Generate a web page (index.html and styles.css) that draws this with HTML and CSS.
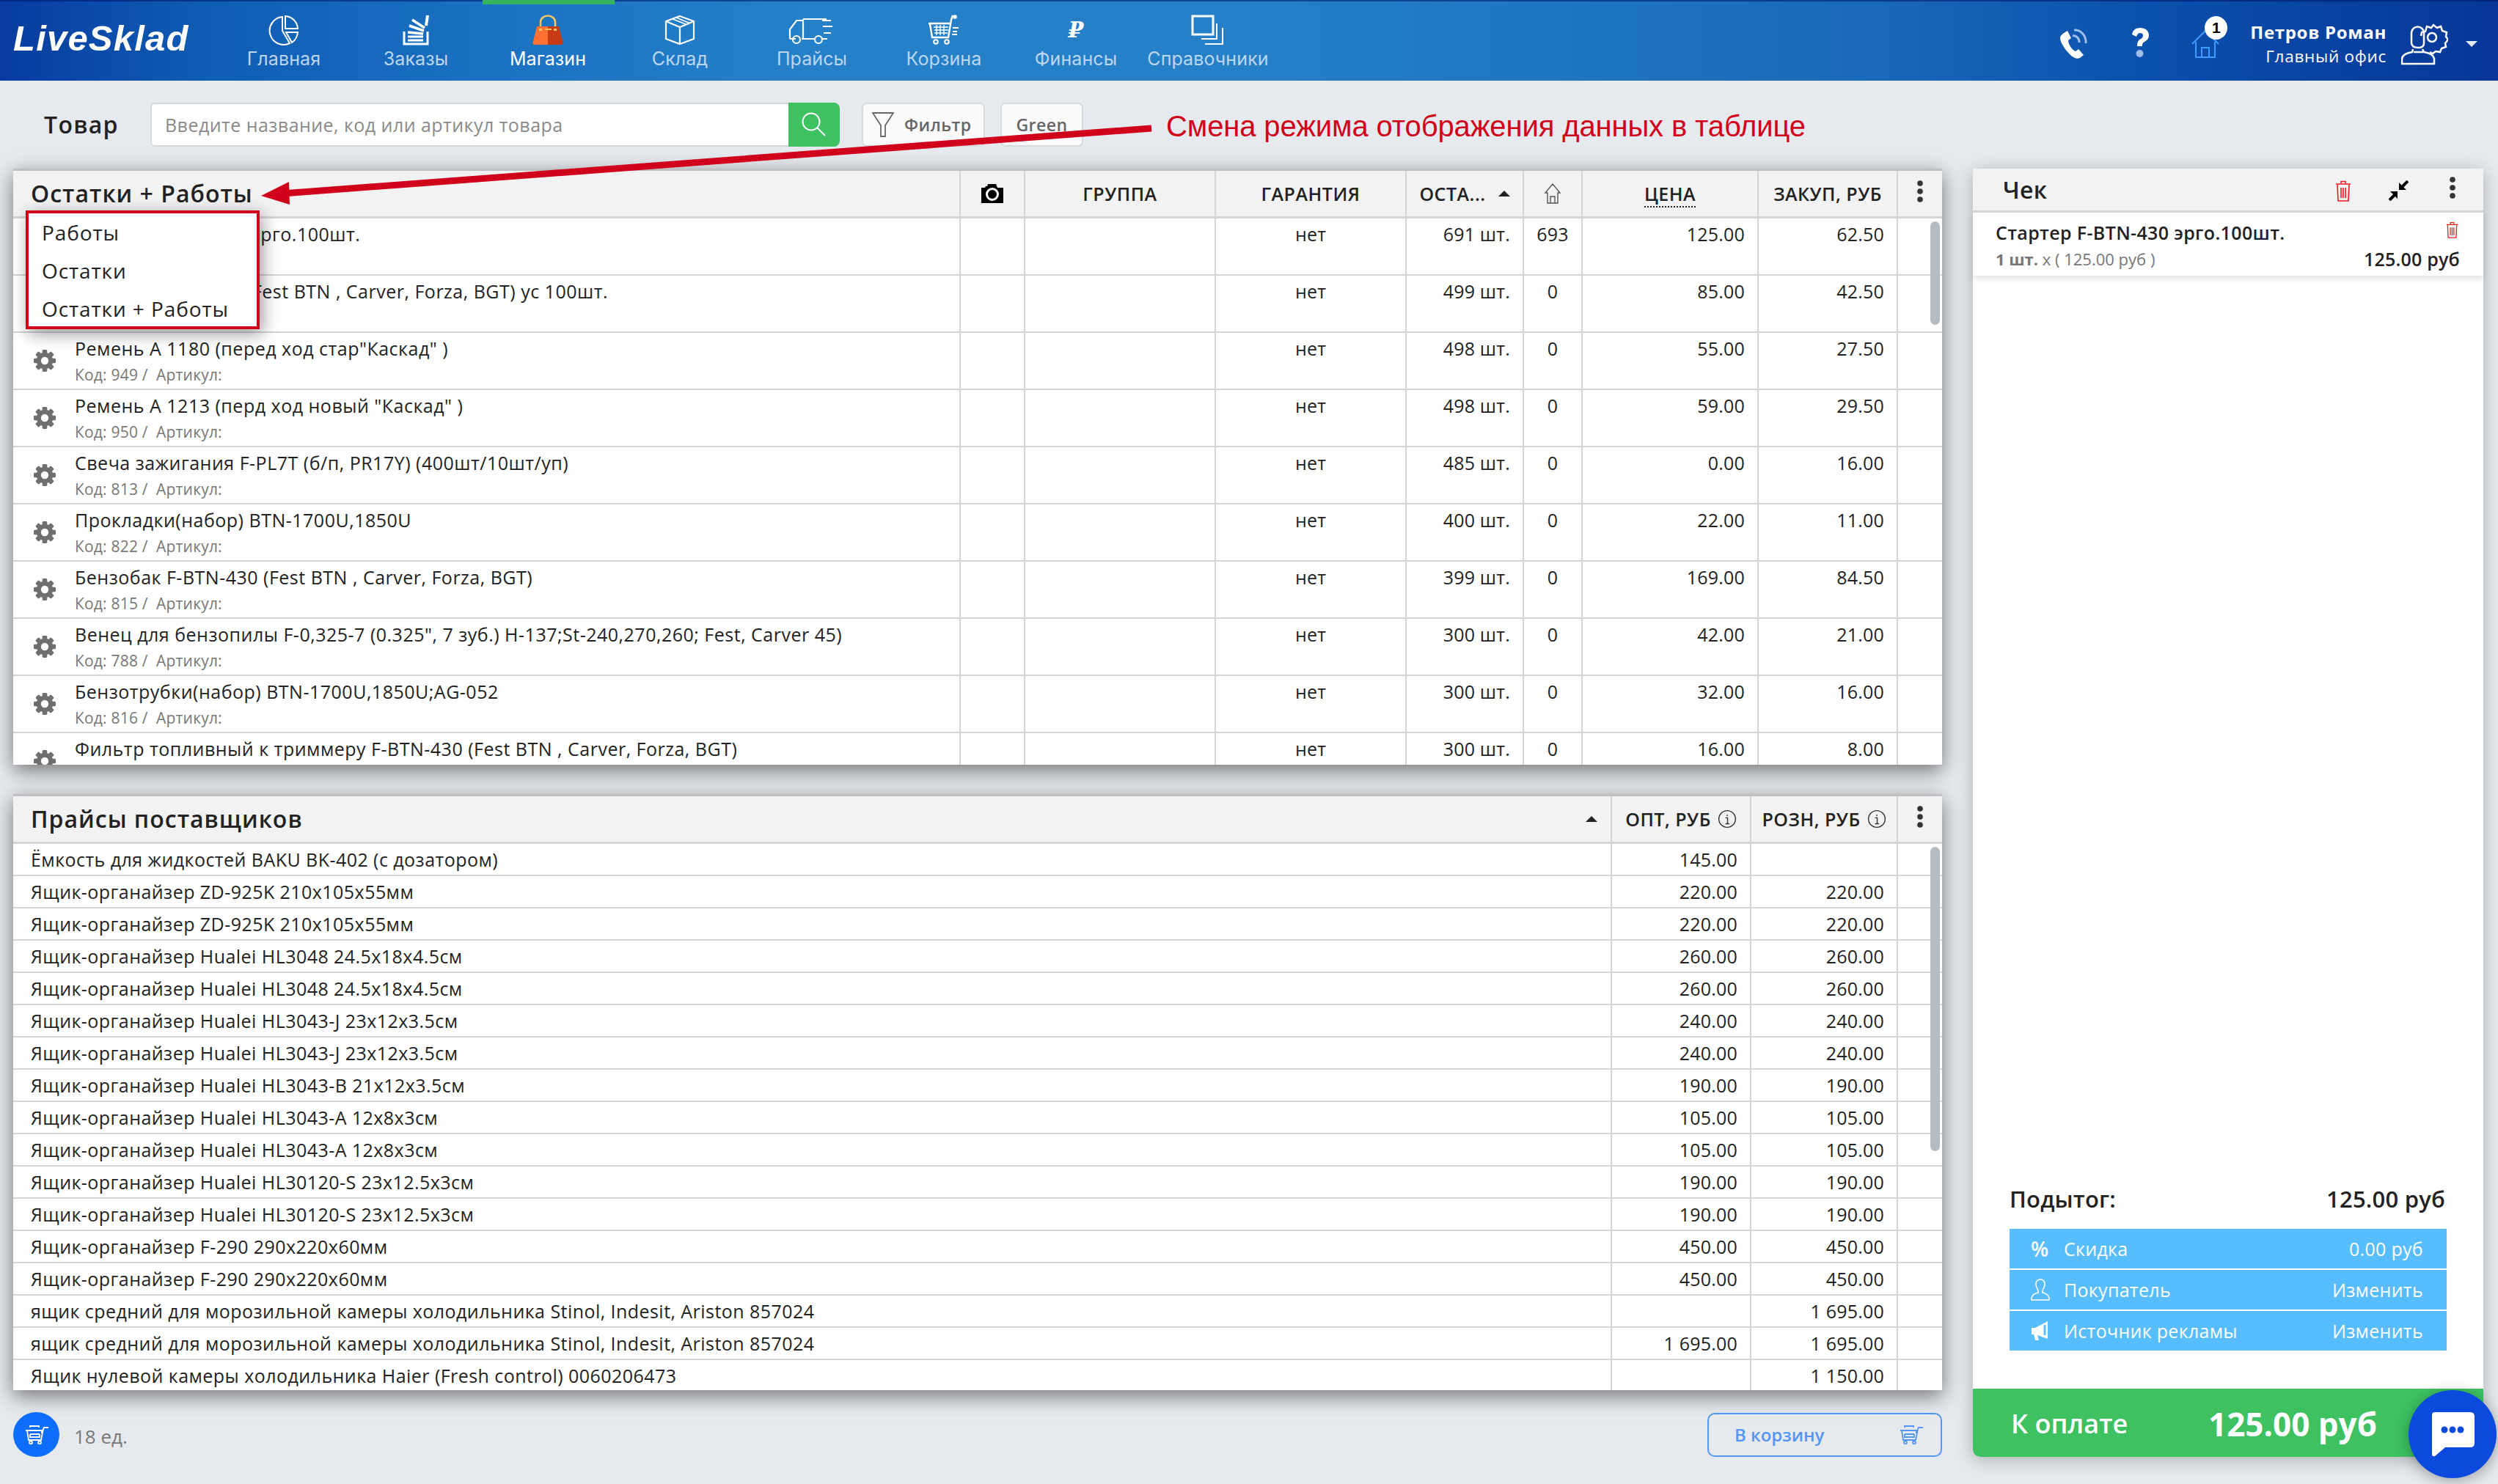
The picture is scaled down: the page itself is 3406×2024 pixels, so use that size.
FILE: index.html
```html
<!DOCTYPE html>
<html lang="ru">
<head>
<meta charset="utf-8">
<title>LiveSklad</title>
<link rel="stylesheet" href="styles.css">
</head>
<body>
<svg class="defs" width="0" height="0">
  <symbol id="gear" viewBox="0 0 32 32">
    <g fill="#6f6f6f">
      <rect x="12.5" y="0" width="7" height="32" rx="1.5"/>
      <rect x="12.5" y="0" width="7" height="32" rx="1.5" transform="rotate(45 16 16)"/>
      <rect x="12.5" y="0" width="7" height="32" rx="1.5" transform="rotate(90 16 16)"/>
      <rect x="12.5" y="0" width="7" height="32" rx="1.5" transform="rotate(135 16 16)"/>
      <circle cx="16" cy="16" r="12"/>
    </g>
    <circle cx="16" cy="16" r="5.5" fill="#fff"/>
  </symbol>
  <symbol id="trash" viewBox="0 0 22 30">
    <g fill="none" stroke="currentColor" stroke-width="1.600">
      <path d="M1 5h20M8 4V1.500h6V4M3 6l1 22h14l1-22M8 10v14M11 10v14M14 10v14"/>
    </g>
  </symbol>
  <symbol id="dots" viewBox="0 0 10 30">
    <circle cx="5" cy="4" r="3.800" fill="currentColor"/><circle cx="5" cy="15" r="3.800" fill="currentColor"/><circle cx="5" cy="26" r="3.800" fill="currentColor"/>
  </symbol>
  <symbol id="cart" viewBox="0 0 32 26">
    <g fill="none" stroke="currentColor" stroke-width="1.800">
      <path d="M1 7h22v4M3 7l2 13h17l3-15 1-2h6M7 3V1h12v2M7 12v4h13v-4M7 12h13"/>
      <circle cx="8" cy="23.500" r="2"/><circle cx="20" cy="23.500" r="2"/>
    </g>
  </symbol>
  <symbol id="info" viewBox="0 0 24 24">
    <circle cx="12" cy="12" r="10.500" fill="none" stroke="#333" stroke-width="1.300"/>
    <path d="M12 6.500v1.800M9.800 10.500H12.500V17.500M9.800 18h5" fill="none" stroke="#333" stroke-width="1.300"/>
  </symbol>
</svg>

<header class="topbar">
  <div class="activebar"></div>
  <div class="logo">LiveSklad</div>
  <nav class="nav">
    <a class="navitem">
      <svg class="navicon" width="42" height="42" viewBox="0 0 42 42"><g fill="none" stroke="#fff" stroke-width="2"><path d="M23 2a18 18 0 0 1 17 17H23zM19 3a19 19 0 1 0 10 36L19 22zM24 24h16a19 19 0 0 1-8 14z"/></g></svg>
      <span>Главная</span>
    </a>
    <a class="navitem">
      <svg class="navicon" width="36" height="42" viewBox="0 0 36 42"><g fill="none" stroke="#fff"><path d="M2 23v17h32V23" stroke-width="3"/><path d="M7 35h21M7 30h21" stroke-width="3"/><path d="M7 24l21 2M9 15l20 7M13 7l17 11" stroke-width="3.500"/><path d="M34 1l-2 14" stroke-width="4"/></g></svg>
      <span>Заказы</span>
    </a>
    <a class="navitem navactive">
      <svg class="navicon" width="42" height="42" viewBox="0 0 42 42"><path d="M11 20V10a10 8.500 0 0 1 20 0v10" fill="none" stroke="#f7c660" stroke-width="2.500"/><path d="M6 16h15v25H3q-3 0-2.500-3z" fill="#ff7032"/><path d="M21 16h15l5.500 22q.5 3-2.500 3H21z" fill="#c63a14"/><path d="M9 19h4v3H9zM29 19h4v3h-4zM17 19h9v2h-9z" fill="#f7c660"/></svg>
      <span>Магазин</span>
    </a>
    <a class="navitem">
      <svg class="navicon" width="42" height="42" viewBox="0 0 42 42"><g fill="none" stroke="#fff" stroke-width="2.200"><path d="M21 2l19 7v24l-19 7-19-7V9zM2 9l19 8 19-8M21 17v23"/><path d="M10 5.500l19 7.500M15 3.500l19 8" stroke-width="1.800"/></g></svg>
      <span>Склад</span>
    </a>
    <a class="navitem">
      <svg class="navicon" width="64" height="42" viewBox="0 0 64 42"><g fill="none" stroke="#fff" stroke-width="2.200"><path d="M10 33H4q-2 0-2-2V20L11 8h9M20 6h32M20 6v27M18 33h15M21 33h14M47 33h6M58 8H46M60 16H47M58 25H48"/><circle cx="11" cy="34" r="5"/><circle cx="41" cy="34" r="5"/></g></svg>
      <span>Прайсы</span>
    </a>
    <a class="navitem">
      <svg class="navicon" width="44" height="42" viewBox="0 0 44 42"><g fill="none" stroke="#fff" stroke-width="2"><path d="M1 12h30M3 13l3 18h22l4-24 2-6" stroke-width="2.400"/><path d="M8 17h20M9 21h19M9 25h18M12 14v14M17 14v14M22 14v14" stroke-width="1.400"/><path d="M34 18h8M34 23h6M33 27h7" stroke-width="1.800"/><circle cx="11" cy="37" r="2.800"/><circle cx="26" cy="37" r="2.800"/></g><circle cx="37" cy="3" r="2.800" fill="#fff"/></svg>
      <span>Корзина</span>
    </a>
    <a class="navitem">
      <span class="rub">₽</span>
      <span>Финансы</span>
    </a>
    <a class="navitem">
      <svg class="navicon" width="46" height="42" viewBox="0 0 46 42"><g fill="none" stroke="#fff"><rect x="2" y="2" width="28" height="25" stroke-width="3"/><path d="M35 12v21H14" stroke-width="2"/><path d="M43 18v22H19" stroke-width="2"/></g></svg>
      <span>Справочники</span>
    </a>
  </nav>
  <div class="userbar">
    <svg class="ic-phone" width="42" height="44" viewBox="0 0 42 44"><path d="M8 9l5-3 5 10-4 3c0 5 5 13 10 15l4-3 7 8-5 4c-4 2-9 0-14-5C10 32 3 22 3 16c0-3 2-5 5-7z" fill="#fff"/><path d="M20 13c5-1 9 3 9 9M22 5c8-1 17 7 16 18" fill="none" stroke="#9bbfe8" stroke-width="3"/></svg>
    <svg class="ic-help" width="28" height="44" viewBox="0 0 28 44"><path d="M3 11C4 5 8 2 14 2c7 0 12 4 12 10 0 5-3 7-6 9-3 2-3 3-3 6H10c0-5 1-8 5-10 2-1 3-3 3-5 0-2-2-3-4-3-3 0-4 2-5 5z" fill="#fff"/><circle cx="13.500" cy="37" r="5" fill="#9bbfe8"/></svg>
    <div class="homewrap">
      <svg width="38" height="40" viewBox="0 0 38 40"><g fill="none" stroke="#3f9bff" stroke-width="2"><path d="M1 20L19 2l18 18M6 17v21h26V17M14 38V25h10v13"/></g></svg>
      <div class="badge">1</div>
    </div>
    <div class="username">
      <div class="uname">Петров Роман</div>
      <div class="uoffice">Главный офис</div>
    </div>
    <svg class="ic-user" width="64" height="64" viewBox="0 0 64 64"><g fill="none" stroke="#fff" stroke-width="2.500"><path d="M27 23l1-5 5-1 2-7 6 2 3-4 5 4 5-2 2 6 6 2-1 6 3 4-4 5 1 5-6 2-2 5-6-1-4 3-4-2"/><circle cx="42" cy="25" r="6"/><path d="M14 19a8 8 0 0 1 17 0v14q0 6-8 6t-9-6zM16 41l-1 4q-13 2-14 9v7h44v-7q-1-7-14-9l-2-4M17 45h13"/></g></svg>
    <div class="caret"></div>
  </div>
</header>

<section class="toolbar">
  <div class="tool-label">Товар</div>
  <div class="search">
    <div class="search-input">Введите название, код или артикул товара</div>
    <div class="search-btn">
      <svg width="36" height="36" viewBox="0 0 36 36"><circle cx="14" cy="14" r="11.500" fill="none" stroke="#fff" stroke-width="2"/><path d="M22 22l11 11" stroke="#fff" stroke-width="2"/></svg>
    </div>
  </div>
  <div class="tool-btn btn-filter">
    <svg width="30" height="34" viewBox="0 0 30 34"><path d="M1 1h28L18 18v15h-6V18z" fill="none" stroke="#666" stroke-width="1.800"/></svg>
    <span>Фильтр</span>
  </div>
  <div class="tool-btn btn-green"><span>Green</span></div>
</section>

<main class="content">
  <div class="leftcol">
    <section class="panel panel-stock">
      <div class="row1 head">
        <div class="c name title"><span class="switch">Остатки + Работы</span></div>
        <div class="c ctr"><svg width="32" height="28" viewBox="0 0 32 28"><path d="M1 6h5l1-2h2l1-3h11l2 5h8v21H1z" fill="#000"/><circle cx="16" cy="15" r="7.500" fill="none" stroke="#fff" stroke-width="3"/></svg></div>
        <div class="c ctr hl">ГРУППА</div>
        <div class="c ctr hl">ГАРАНТИЯ</div>
        <div class="c ctr hl">ОСТА... <i class="sort"></i></div>
        <div class="c ctr"><svg width="24" height="28" viewBox="0 0 24 28"><g fill="none" stroke="#555" stroke-width="1.400"><path d="M12 1l10 12h-3v14H5V13H2zM9 27v-9h6v9"/></g></svg></div>
        <div class="c ctr hl"><span class="dotted">ЦЕНА</span></div>
        <div class="c ctr hl">ЗАКУП, РУБ</div>
        <div class="c ctr menu"><svg class="dots" width="10" height="30"><use href="#dots"/></svg></div>
      </div>
      <div class="body">
        <div class="row1 item"><div class="c name"><svg class="gear"><use href="#gear"/></svg><div class="it"><div class="t">Стартер F-BTN-430 эрго.100шт.</div></div></div><div class="c"></div><div class="c"></div><div class="c ctr-t">нет</div><div class="c num">691 шт.</div><div class="c ctr-t">693</div><div class="c num">125.00</div><div class="c num">62.50</div><div class="c"></div></div>
        <div class="row1 item"><div class="c name"><svg class="gear"><use href="#gear"/></svg><div class="it"><div class="t">Фильтр F-BTN-430 (Fest BTN , Carver, Forza, BGT) ус 100шт.</div></div></div><div class="c"></div><div class="c"></div><div class="c ctr-t">нет</div><div class="c num">499 шт.</div><div class="c ctr-t">0</div><div class="c num">85.00</div><div class="c num">42.50</div><div class="c"></div></div>
        <div class="row1 item"><div class="c name"><svg class="gear"><use href="#gear"/></svg><div class="it"><div class="t">Ремень А 1180 (перед ход стар"Каскад" )</div><div class="s">Код: 949 /&nbsp; Артикул:</div></div></div><div class="c"></div><div class="c"></div><div class="c ctr-t">нет</div><div class="c num">498 шт.</div><div class="c ctr-t">0</div><div class="c num">55.00</div><div class="c num">27.50</div><div class="c"></div></div>
        <div class="row1 item"><div class="c name"><svg class="gear"><use href="#gear"/></svg><div class="it"><div class="t">Ремень А 1213 (перд ход новый "Каскад" )</div><div class="s">Код: 950 /&nbsp; Артикул:</div></div></div><div class="c"></div><div class="c"></div><div class="c ctr-t">нет</div><div class="c num">498 шт.</div><div class="c ctr-t">0</div><div class="c num">59.00</div><div class="c num">29.50</div><div class="c"></div></div>
        <div class="row1 item"><div class="c name"><svg class="gear"><use href="#gear"/></svg><div class="it"><div class="t">Свеча зажигания F-PL7T (б/п, PR17Y) (400шт/10шт/уп)</div><div class="s">Код: 813 /&nbsp; Артикул:</div></div></div><div class="c"></div><div class="c"></div><div class="c ctr-t">нет</div><div class="c num">485 шт.</div><div class="c ctr-t">0</div><div class="c num">0.00</div><div class="c num">16.00</div><div class="c"></div></div>
        <div class="row1 item"><div class="c name"><svg class="gear"><use href="#gear"/></svg><div class="it"><div class="t">Прокладки(набор) BTN-1700U,1850U</div><div class="s">Код: 822 /&nbsp; Артикул:</div></div></div><div class="c"></div><div class="c"></div><div class="c ctr-t">нет</div><div class="c num">400 шт.</div><div class="c ctr-t">0</div><div class="c num">22.00</div><div class="c num">11.00</div><div class="c"></div></div>
        <div class="row1 item"><div class="c name"><svg class="gear"><use href="#gear"/></svg><div class="it"><div class="t">Бензобак F-BTN-430 (Fest BTN , Carver, Forza, BGT)</div><div class="s">Код: 815 /&nbsp; Артикул:</div></div></div><div class="c"></div><div class="c"></div><div class="c ctr-t">нет</div><div class="c num">399 шт.</div><div class="c ctr-t">0</div><div class="c num">169.00</div><div class="c num">84.50</div><div class="c"></div></div>
        <div class="row1 item"><div class="c name"><svg class="gear"><use href="#gear"/></svg><div class="it"><div class="t">Венец для бензопилы F-0,325-7 (0.325", 7 зуб.) H-137;St-240,270,260; Fest, Carver 45)</div><div class="s">Код: 788 /&nbsp; Артикул:</div></div></div><div class="c"></div><div class="c"></div><div class="c ctr-t">нет</div><div class="c num">300 шт.</div><div class="c ctr-t">0</div><div class="c num">42.00</div><div class="c num">21.00</div><div class="c"></div></div>
        <div class="row1 item"><div class="c name"><svg class="gear"><use href="#gear"/></svg><div class="it"><div class="t">Бензотрубки(набор) BTN-1700U,1850U;AG-052</div><div class="s">Код: 816 /&nbsp; Артикул:</div></div></div><div class="c"></div><div class="c"></div><div class="c ctr-t">нет</div><div class="c num">300 шт.</div><div class="c ctr-t">0</div><div class="c num">32.00</div><div class="c num">16.00</div><div class="c"></div></div>
        <div class="row1 item"><div class="c name"><svg class="gear"><use href="#gear"/></svg><div class="it"><div class="t">Фильтр топливный к триммеру F-BTN-430 (Fest BTN , Carver, Forza, BGT)</div></div></div><div class="c"></div><div class="c"></div><div class="c ctr-t">нет</div><div class="c num">300 шт.</div><div class="c ctr-t">0</div><div class="c num">16.00</div><div class="c num">8.00</div><div class="c"></div></div>
      </div>
      <div class="thumb thumb1"></div>
      <div class="dropdown">
        <div class="dd-item">Работы</div>
        <div class="dd-item">Остатки</div>
        <div class="dd-item">Остатки + Работы</div>
      </div>
    </section>

    <section class="panel panel-price">
      <div class="row2 head">
        <div class="c name2 title"><span>Прайсы поставщиков</span><i class="sort"></i></div>
        <div class="c ctr hl">ОПТ, РУБ <svg class="info" width="26" height="26"><use href="#info"/></svg></div>
        <div class="c ctr hl">РОЗН, РУБ <svg class="info" width="26" height="26"><use href="#info"/></svg></div>
        <div class="c ctr menu"><svg class="dots" width="10" height="30"><use href="#dots"/></svg></div>
      </div>
      <div class="body">
        <div class="row2 item2"><div class="c n2">Ёмкость для жидкостей BAKU BK-402 (с дозатором)</div><div class="c num2">145.00</div><div class="c num2"></div><div class="c"></div></div>
        <div class="row2 item2"><div class="c n2">Ящик-органайзер ZD-925K 210x105x55мм</div><div class="c num2">220.00</div><div class="c num2">220.00</div><div class="c"></div></div>
        <div class="row2 item2"><div class="c n2">Ящик-органайзер ZD-925K 210x105x55мм</div><div class="c num2">220.00</div><div class="c num2">220.00</div><div class="c"></div></div>
        <div class="row2 item2"><div class="c n2">Ящик-органайзер Hualei HL3048 24.5x18x4.5см</div><div class="c num2">260.00</div><div class="c num2">260.00</div><div class="c"></div></div>
        <div class="row2 item2"><div class="c n2">Ящик-органайзер Hualei HL3048 24.5x18x4.5см</div><div class="c num2">260.00</div><div class="c num2">260.00</div><div class="c"></div></div>
        <div class="row2 item2"><div class="c n2">Ящик-органайзер Hualei HL3043-J 23x12x3.5см</div><div class="c num2">240.00</div><div class="c num2">240.00</div><div class="c"></div></div>
        <div class="row2 item2"><div class="c n2">Ящик-органайзер Hualei HL3043-J 23x12x3.5см</div><div class="c num2">240.00</div><div class="c num2">240.00</div><div class="c"></div></div>
        <div class="row2 item2"><div class="c n2">Ящик-органайзер Hualei HL3043-B 21x12x3.5см</div><div class="c num2">190.00</div><div class="c num2">190.00</div><div class="c"></div></div>
        <div class="row2 item2"><div class="c n2">Ящик-органайзер Hualei HL3043-A 12x8x3см</div><div class="c num2">105.00</div><div class="c num2">105.00</div><div class="c"></div></div>
        <div class="row2 item2"><div class="c n2">Ящик-органайзер Hualei HL3043-A 12x8x3см</div><div class="c num2">105.00</div><div class="c num2">105.00</div><div class="c"></div></div>
        <div class="row2 item2"><div class="c n2">Ящик-органайзер Hualei HL30120-S 23x12.5x3см</div><div class="c num2">190.00</div><div class="c num2">190.00</div><div class="c"></div></div>
        <div class="row2 item2"><div class="c n2">Ящик-органайзер Hualei HL30120-S 23x12.5x3см</div><div class="c num2">190.00</div><div class="c num2">190.00</div><div class="c"></div></div>
        <div class="row2 item2"><div class="c n2">Ящик-органайзер F-290 290x220x60мм</div><div class="c num2">450.00</div><div class="c num2">450.00</div><div class="c"></div></div>
        <div class="row2 item2"><div class="c n2">Ящик-органайзер F-290 290x220x60мм</div><div class="c num2">450.00</div><div class="c num2">450.00</div><div class="c"></div></div>
        <div class="row2 item2"><div class="c n2">ящик средний для морозильной камеры холодильника Stinol, Indesit, Ariston 857024</div><div class="c num2"></div><div class="c num2">1 695.00</div><div class="c"></div></div>
        <div class="row2 item2"><div class="c n2">ящик средний для морозильной камеры холодильника Stinol, Indesit, Ariston 857024</div><div class="c num2">1 695.00</div><div class="c num2">1 695.00</div><div class="c"></div></div>
        <div class="row2 item2"><div class="c n2">Ящик нулевой камеры холодильника Haier (Fresh control) 0060206473</div><div class="c num2"></div><div class="c num2">1 150.00</div><div class="c"></div></div>
      </div>
      <div class="thumb thumb2"></div>
    </section>

    <footer class="leftfoot">
      <div class="roundcart"><svg width="32" height="26"><use href="#cart"/></svg></div>
      <div class="qty">18 ед.</div>
      <div class="tocart"><span>В корзину</span><svg width="32" height="26"><use href="#cart"/></svg></div>
    </footer>
  </div>

  <aside class="check">
    <div class="check-head">
      <div class="check-title">Чек</div>
      <svg class="ch-trash" width="22" height="30"><use href="#trash"/></svg>
      <svg class="ch-compress" width="28" height="28" viewBox="0 0 28 28"><path d="M27 1L19 9M2 27l8-8" stroke="#000" stroke-width="4"/><path d="M15 3v10h10zM13 25V15H3z" fill="#000"/></svg>
      <svg class="dots ch-dots" width="10" height="30"><use href="#dots"/></svg>
    </div>
    <div class="check-item">
      <div class="ci-top"><span class="ci-name">Стартер F-BTN-430 эрго.100шт.</span><svg class="ci-trash" width="17" height="24"><use href="#trash"/></svg></div>
      <div class="ci-bottom"><span class="ci-qty"><b>1 шт.</b> x ( 125.00 руб )</span><span class="ci-sum">125.00 руб</span></div>
    </div>
    <div class="check-space"></div>
    <div class="subtotal"><span>Подытог:</span><span>125.00 руб</span></div>
    <div class="opts">
      <div class="opt"><span class="pct">%</span><span class="opt-l">Скидка</span><span class="opt-r">0.00 руб</span></div>
      <div class="opt"><svg width="26" height="30" viewBox="0 0 26 30"><path d="M13 1c-4 0-6 3-6 7 0 3 2 6 3 8v3q-8 2-9 7v3h24v-3q-1-5-9-7v-3c1-2 3-5 3-8 0-4-2-7-6-7z" fill="none" stroke="#fff" stroke-width="1.500"/></svg><span class="opt-l">Покупатель</span><span class="opt-r">Изменить</span></div>
      <div class="opt"><svg width="26" height="30" viewBox="0 0 26 30"><path d="M1 11h5L23 2v24L9 21l2 7H6l-2-8H1z" fill="#fff"/><path d="M19 7v14" stroke="#57bdff" stroke-width="3"/></svg><span class="opt-l">Источник рекламы</span><span class="opt-r">Изменить</span></div>
    </div>
    <div class="pay"><span class="pay-l">К оплате</span><span class="pay-r">125.00 руб</span></div>
  </aside>
</main>

<div class="annotation">Смена режима отображения данных в таблице</div>
<svg class="arrow" width="1240" height="130" viewBox="350 160 1240 130"><path d="M1570 175L385 264" stroke="#d0021b" stroke-width="9" fill="none"/><path d="M356 267l38-19 1 31z" fill="#d0021b"/></svg>

<div class="chat">
  <svg width="64" height="64" viewBox="0 0 64 64"><path d="M8 2h48q6 0 6 6v36q0 6-6 6H22L8 62q-4 1-4-3V6q0-4 4-4z" fill="#fff"/><circle cx="21" cy="26" r="4.500" fill="#0c49dd"/><circle cx="32" cy="26" r="4.500" fill="#0c49dd"/><circle cx="43" cy="26" r="4.500" fill="#0c49dd"/></svg>
</div>
</body>
</html>
```

FILE: styles.css
```css
* { box-sizing: border-box; }
html, body { margin: 0; padding: 0; }
body {
  width: 3406px; height: 2024px; overflow: hidden; position: relative;
  background: #e6e9ed;
  font-family: "Open Sans", "Noto Sans", sans-serif;
  font-size: 24px; color: #222;
}
.defs { position: absolute; }

/* top bar */
.topbar {
  height: 110px; display: flex; position: relative; color: #fff;
  border-top: 2px solid rgba(0,20,100,.55);
  background: linear-gradient(90deg, #083b9f 0%, #0f5cb4 8%, #1b72c2 20%, #2580c8 32%, #2580c8 50%, #1f76c2 62%, #1a68b9 75%, #0b50ac 86%, #073698 100%);
}
.activebar { position: absolute; left: 658px; top: -2px; width: 180px; height: 6px; background: #35b35e; }
.logo {
  width: 297px; padding: 21px 0 0 18px; font-family: "Liberation Sans", sans-serif;
  font-weight: 700; font-style: italic; font-size: 49px; line-height: 58px; letter-spacing: 1.2px; color: #fff;
}
.nav { display: flex; }
.navitem { width: 180px; display: flex; flex-direction: column; align-items: center; padding-top: 18px; color: #bcd6ee; font-family: Inter, sans-serif; font-size: 25px; letter-spacing: .1px; line-height: 30px; height: 108px; }
.navitem.navactive { color: #fff; }
.navicon { height: 42px; display: block; margin-bottom: 3px; }
.rub { font-family: "DejaVu Serif", serif; font-style: italic; font-weight: 700; font-size: 30px; color: #fff; height: 45px; line-height: 42px; }

.userbar { margin-left: auto; display: flex; align-items: flex-start; padding: 20px 28px 0 0; position: relative; }
.ic-phone { margin: 14px 56px 0 0; }
.ic-help { margin: 14px 56px 0 0; }
.homewrap { position: relative; width: 38px; height: 40px; margin: 18px 42px 0 0; }
.badge { position: absolute; left: 18px; top: -18px; width: 31px; height: 32px; border-radius: 50%; background: #fff; color: #000; font: 700 21px/32px "Liberation Sans", sans-serif; text-align: center; }
.username { text-align: right; margin: 0 20px 0 0; padding-top: 5px; }
.uname { font: 700 24px/34px "Open Sans", sans-serif; letter-spacing: .7px; }
.uoffice { font-size: 22.5px; line-height: 32px; letter-spacing: .7px; }
.ic-user { margin: 4px 0 0 0; }
.caret { margin: 34px 0 0 24px; width: 0; height: 0; border-left: 8px solid transparent; border-right: 8px solid transparent; border-top: 8px solid #e2ecf7; }

/* toolbar */
.toolbar { display: flex; align-items: stretch; margin: 30px 0; height: 60px; padding-left: 60px; }
.tool-label { width: 145px; font-size: 32px; font-weight: 600; line-height: 60px; color: #222; letter-spacing: 1.3px; }
.search { display: flex; width: 940px; }
.search-input { flex: 1; background: #fff; border: 2px solid #d5d7da; border-right: 0; border-radius: 6px 0 0 6px; color: #8a8a8a; font-size: 25px; line-height: 56px; padding-left: 18px; letter-spacing: .45px; }
.search-btn { width: 70px; background: #3dc161; border-radius: 0 8px 8px 0; display: flex; align-items: center; justify-content: center; }
.tool-btn { display: flex; align-items: center; height: 60px; background: #fafafa; border: 2px solid #d8dbde; border-radius: 7px; color: #666; font-size: 23px; font-weight: 600; letter-spacing: .5px; }
.btn-filter { width: 168px; margin-left: 30px; padding-left: 12px; gap: 14px; }
.btn-green { width: 113px; margin-left: 21px; justify-content: center; }

/* layout */
.content { display: flex; padding-left: 18px; gap: 42px; }
.leftcol { width: 2630px; display: flex; flex-direction: column; gap: 40px; }
.panel { position: relative; height: 813px; background: #fff; box-shadow: 0 8px 26px rgba(0,0,0,.5); overflow: visible; }
.panel .body { height: 745px; overflow: hidden; background: #fff; }
.panel-price { height: 813px; }
.row1 { display: grid; grid-template-columns: 1292px 88px 260px 260px 160px 80px 240px 190px 60px; }
.row2 { display: grid; grid-template-columns: 2180px 190px 200px 60px; }
.c { border-right: 2px solid #d5d5d5; min-width: 0; }
.c:last-child { border-right: 0; }
.head { height: 68px; background: #f2f2f2; border-top: 3px solid #bdbfc1; border-bottom: 3px solid #d5d5d5; }
.title { font-size: 32px; font-weight: 600; color: #222; line-height: 62px; padding-left: 24px; letter-spacing: 1px; white-space: nowrap; }
.switch { display: inline-block; line-height: 44px; border-bottom: 2px dotted #222; margin-top: 9px; }
.name2 { display: flex; justify-content: space-between; align-items: center; padding-right: 18px; line-height: 62px; }
.ctr { display: flex; align-items: center; justify-content: center; }
.hl { font-size: 25px; font-weight: 600; color: #222; letter-spacing: .5px; white-space: pre; }
.dotted { border-bottom: 2px dotted #222; padding-bottom: 2px; line-height: 30px; margin-top: 4px; }
.sort { display: inline-block; width: 0; height: 0; margin-left: 10px; border-left: 8px solid transparent; border-right: 8px solid transparent; border-bottom: 8px solid #222; }
.menu { padding-bottom: 6px; }
.dots { color: #333; display: block; }
.info { margin-left: 2px; }

.item { height: 78px; border-bottom: 2px solid #d5d5d5; }
.item .c { padding-top: 4px; line-height: 34px; }
.name { display: flex; }
.gear { width: 30px; height: 30px; flex: none; margin: 19px 26px 0 28px; }
.t { font-size: 25px; line-height: 34px; white-space: nowrap; letter-spacing: .5px; color: #222; }
.s { font-size: 21px; line-height: 34px; margin-top: 2px; color: #777; white-space: nowrap; letter-spacing: .2px; }
.num { text-align: right; padding-right: 17px; font-size: 25px; letter-spacing: .2px; }
.ctr-t { text-align: center; font-size: 25px; letter-spacing: .2px; }

.item2 { height: 44px; border-bottom: 2px solid #d5d5d5; }
.item2 .c { line-height: 42px; }
.n2 { padding-left: 24px; font-size: 25px; letter-spacing: .45px; white-space: nowrap; }
.num2 { text-align: right; padding-right: 17px; font-size: 25px; letter-spacing: .2px; }

.thumb { position: absolute; right: 3px; width: 13px; background: #b4bcc2; border-radius: 7px; }
.thumb1 { top: 72px; height: 141px; }
.thumb2 { top: 72px; height: 415px; }

/* dropdown */
.dropdown {
  position: absolute; left: 17px; top: 57px; width: 319px; height: 162px;
  border: 4px solid #d0021b; background: #fff; padding: 0;
  box-shadow: 4px 6px 22px rgba(0,0,0,.4);
}
.dd-item { font-size: 28px; line-height: 52px; padding-left: 18px; color: #222; letter-spacing: .9px; white-space: nowrap; }

/* footer */
.leftfoot { display: flex; align-items: center; height: 61px; margin-top: -10px; }
.roundcart { width: 63px; height: 61px; border-radius: 50%; background: #0d6efd; color: #fff; display: flex; align-items: center; justify-content: center; }
.qty { margin-left: 20px; margin-top: 4px; font-size: 26px; color: #777; }
.tocart { margin-left: auto; width: 320px; height: 60px; border: 2px solid #5596f5; border-radius: 10px; color: #5596f5; font-size: 24px; font-weight: 600; display: flex; align-items: center; justify-content: space-between; padding: 0 24px 0 35px; }

/* check */
.check { width: 696px; height: 1757px; background: #fff; box-shadow: 0 4px 24px rgba(0,0,0,.25); display: flex; flex-direction: column; border-radius: 0 0 10px 10px; }
.check-head { height: 60px; background: #f2f2f2; border-bottom: 3px solid #d5d5d5; display: flex; align-items: center; position: relative; padding-left: 41px; }
.check-title { font-size: 32px; font-weight: 600; letter-spacing: .3px; }
.ch-trash { color: #f5141e; margin-left: auto; margin-top: 5px; margin-right: -2px; }
.ch-compress { margin-left: 52px; margin-top: 3px; }
.ch-dots { margin: -6px 37px 0 55px; }
.check-item { height: 86px; padding: 10px 32px 0 31px; box-shadow: 0 4px 8px rgba(0,0,0,.12); position: relative; }
.ci-top { display: flex; justify-content: space-between; line-height: 34px; }
.ci-name { font-size: 25px; font-weight: 600; letter-spacing: .35px; color: #222; }
.ci-trash { color: #f5141e; margin: 2px 2px 0 0; }
.ci-bottom { display: flex; justify-content: space-between; line-height: 38px; }
.ci-qty { font-size: 22px; color: #777; }
.ci-qty b { font-weight: 700; }
.ci-sum { font-size: 25px; font-weight: 600; letter-spacing: .2px; }
.check-space { flex: 1; }
.subtotal { display: flex; justify-content: space-between; padding: 0 52px 0 50px; font-size: 31px; font-weight: 600; line-height: 42px; margin-bottom: 20px; letter-spacing: .2px; }
.opts { margin: 0 50px; display: flex; flex-direction: column; gap: 2px; }
.opt { height: 54px; background: #57bdff; color: #fff; font-size: 25px; display: flex; align-items: center; padding: 0 32px 0 29px; }
.pct { width: 26px; font-size: 28px; font-weight: 600; }
.opt-l { margin-left: 19px; letter-spacing: .3px; }
.opt-r { margin-left: auto; letter-spacing: .3px; }
.pay { height: 93px; margin-top: 52px; background: #3dc161; border-radius: 0 0 10px 10px; color: #fff; display: flex; align-items: center; padding-left: 52px; padding-top: 2px; }
.pay-l { font-size: 36px; font-weight: 600; width: 269px; }
.pay-r { font-size: 44px; font-weight: 700; }

/* overlays */
.annotation { position: absolute; left: 1590px; top: 146px; font: 400 40px/52px "Liberation Sans", sans-serif; color: #d0021b; white-space: nowrap; letter-spacing: -.12px; }
.arrow { position: absolute; left: 350px; top: 160px; }
.chat { position: absolute; left: 3284px; top: 1896px; width: 120px; height: 120px; border-radius: 50%; background: #0c49dd; display: flex; align-items: center; justify-content: center; box-shadow: 0 4px 20px rgba(0,0,0,.3); }
```
